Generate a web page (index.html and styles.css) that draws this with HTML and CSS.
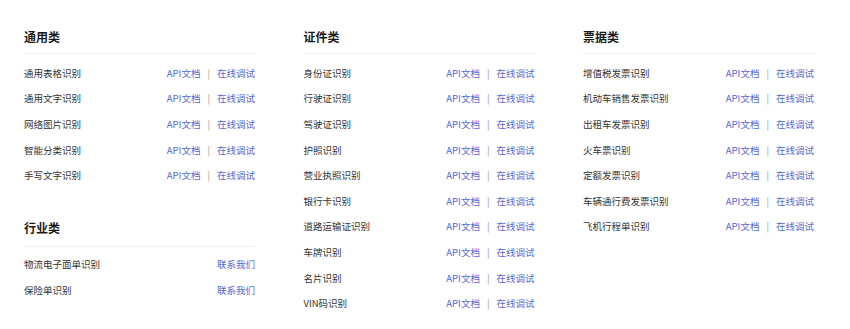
FILE: index.html
```html
<!DOCTYPE html>
<html lang="zh-CN">
<head>
<meta charset="utf-8">
<title>文字识别</title>
<link rel="stylesheet" href="styles.css">
</head>
<body>
<div class="grid">
  <div class="col">
    <section class="group">
      <h3 class="title">通用类</h3>
      <ul class="list">
        <li class="row"><span class="name">通用表格识别</span><span class="links"><a class="link">API文档</a><span class="sep">|</span><a class="link">在线调试</a></span></li>
        <li class="row"><span class="name">通用文字识别</span><span class="links"><a class="link">API文档</a><span class="sep">|</span><a class="link">在线调试</a></span></li>
        <li class="row"><span class="name">网络图片识别</span><span class="links"><a class="link">API文档</a><span class="sep">|</span><a class="link">在线调试</a></span></li>
        <li class="row"><span class="name">智能分类识别</span><span class="links"><a class="link">API文档</a><span class="sep">|</span><a class="link">在线调试</a></span></li>
        <li class="row"><span class="name">手写文字识别</span><span class="links"><a class="link">API文档</a><span class="sep">|</span><a class="link">在线调试</a></span></li>
      </ul>
    </section>
    <section class="group group-next">
      <h3 class="title">行业类</h3>
      <ul class="list">
        <li class="row"><span class="name">物流电子面单识别</span><span class="links"><a class="link">联系我们</a></span></li>
        <li class="row"><span class="name">保险单识别</span><span class="links"><a class="link">联系我们</a></span></li>
      </ul>
    </section>
  </div>
  <div class="col">
    <section class="group">
      <h3 class="title">证件类</h3>
      <ul class="list">
        <li class="row"><span class="name">身份证识别</span><span class="links"><a class="link">API文档</a><span class="sep">|</span><a class="link">在线调试</a></span></li>
        <li class="row"><span class="name">行驶证识别</span><span class="links"><a class="link">API文档</a><span class="sep">|</span><a class="link">在线调试</a></span></li>
        <li class="row"><span class="name">驾驶证识别</span><span class="links"><a class="link">API文档</a><span class="sep">|</span><a class="link">在线调试</a></span></li>
        <li class="row"><span class="name">护照识别</span><span class="links"><a class="link">API文档</a><span class="sep">|</span><a class="link">在线调试</a></span></li>
        <li class="row"><span class="name">营业执照识别</span><span class="links"><a class="link">API文档</a><span class="sep">|</span><a class="link">在线调试</a></span></li>
        <li class="row"><span class="name">银行卡识别</span><span class="links"><a class="link">API文档</a><span class="sep">|</span><a class="link">在线调试</a></span></li>
        <li class="row"><span class="name">道路运输证识别</span><span class="links"><a class="link">API文档</a><span class="sep">|</span><a class="link">在线调试</a></span></li>
        <li class="row"><span class="name">车牌识别</span><span class="links"><a class="link">API文档</a><span class="sep">|</span><a class="link">在线调试</a></span></li>
        <li class="row"><span class="name">名片识别</span><span class="links"><a class="link">API文档</a><span class="sep">|</span><a class="link">在线调试</a></span></li>
        <li class="row"><span class="name">VIN码识别</span><span class="links"><a class="link">API文档</a><span class="sep">|</span><a class="link">在线调试</a></span></li>
      </ul>
    </section>
  </div>
  <div class="col">
    <section class="group">
      <h3 class="title">票据类</h3>
      <ul class="list">
        <li class="row"><span class="name">增值税发票识别</span><span class="links"><a class="link">API文档</a><span class="sep">|</span><a class="link">在线调试</a></span></li>
        <li class="row"><span class="name">机动车销售发票识别</span><span class="links"><a class="link">API文档</a><span class="sep">|</span><a class="link">在线调试</a></span></li>
        <li class="row"><span class="name">出租车发票识别</span><span class="links"><a class="link">API文档</a><span class="sep">|</span><a class="link">在线调试</a></span></li>
        <li class="row"><span class="name">火车票识别</span><span class="links"><a class="link">API文档</a><span class="sep">|</span><a class="link">在线调试</a></span></li>
        <li class="row"><span class="name">定额发票识别</span><span class="links"><a class="link">API文档</a><span class="sep">|</span><a class="link">在线调试</a></span></li>
        <li class="row"><span class="name">车辆通行费发票识别</span><span class="links"><a class="link">API文档</a><span class="sep">|</span><a class="link">在线调试</a></span></li>
        <li class="row"><span class="name">飞机行程单识别</span><span class="links"><a class="link">API文档</a><span class="sep">|</span><a class="link">在线调试</a></span></li>
      </ul>
    </section>
  </div>
</div>
</body>
</html>
```

FILE: styles.css
```css
html, body {
  margin: 0;
  padding: 0;
  background: #ffffff;
}
body {
  font-family: "Noto Sans CJK SC", "Noto Sans", sans-serif;
  color: #333333;
}
.grid {
  display: grid;
  grid-template-columns: 231px 231px 231px;
  column-gap: 48.5px;
  padding: 29px 0 0 24px;
}
.col {
  display: flex;
  flex-direction: column;
}
.group-next {
  margin-top: 32px;
}
.title {
  margin: 0;
  font-size: 12px;
  line-height: 16px;
  font-weight: 700;
  color: #1a1a1a;
  padding-bottom: 8px;
  border-bottom: 1px solid #efefef;
}
.group-next .title {
  padding-bottom: 10px;
}
.list {
  list-style: none;
  margin: 6px 0 0;
  padding: 0;
}
.group-next .list {
  margin-top: 4.5px;
}
.row {
  display: flex;
  justify-content: space-between;
  align-items: center;
  height: 25.6px;
  font-size: 9.5px;
}
.name {
  color: #333333;
}
.links {
  display: flex;
  align-items: center;
}
.link {
  color: #5868d3;
  cursor: pointer;
}
.sep {
  color: #999999;
  margin: 0 7px;
}
```
